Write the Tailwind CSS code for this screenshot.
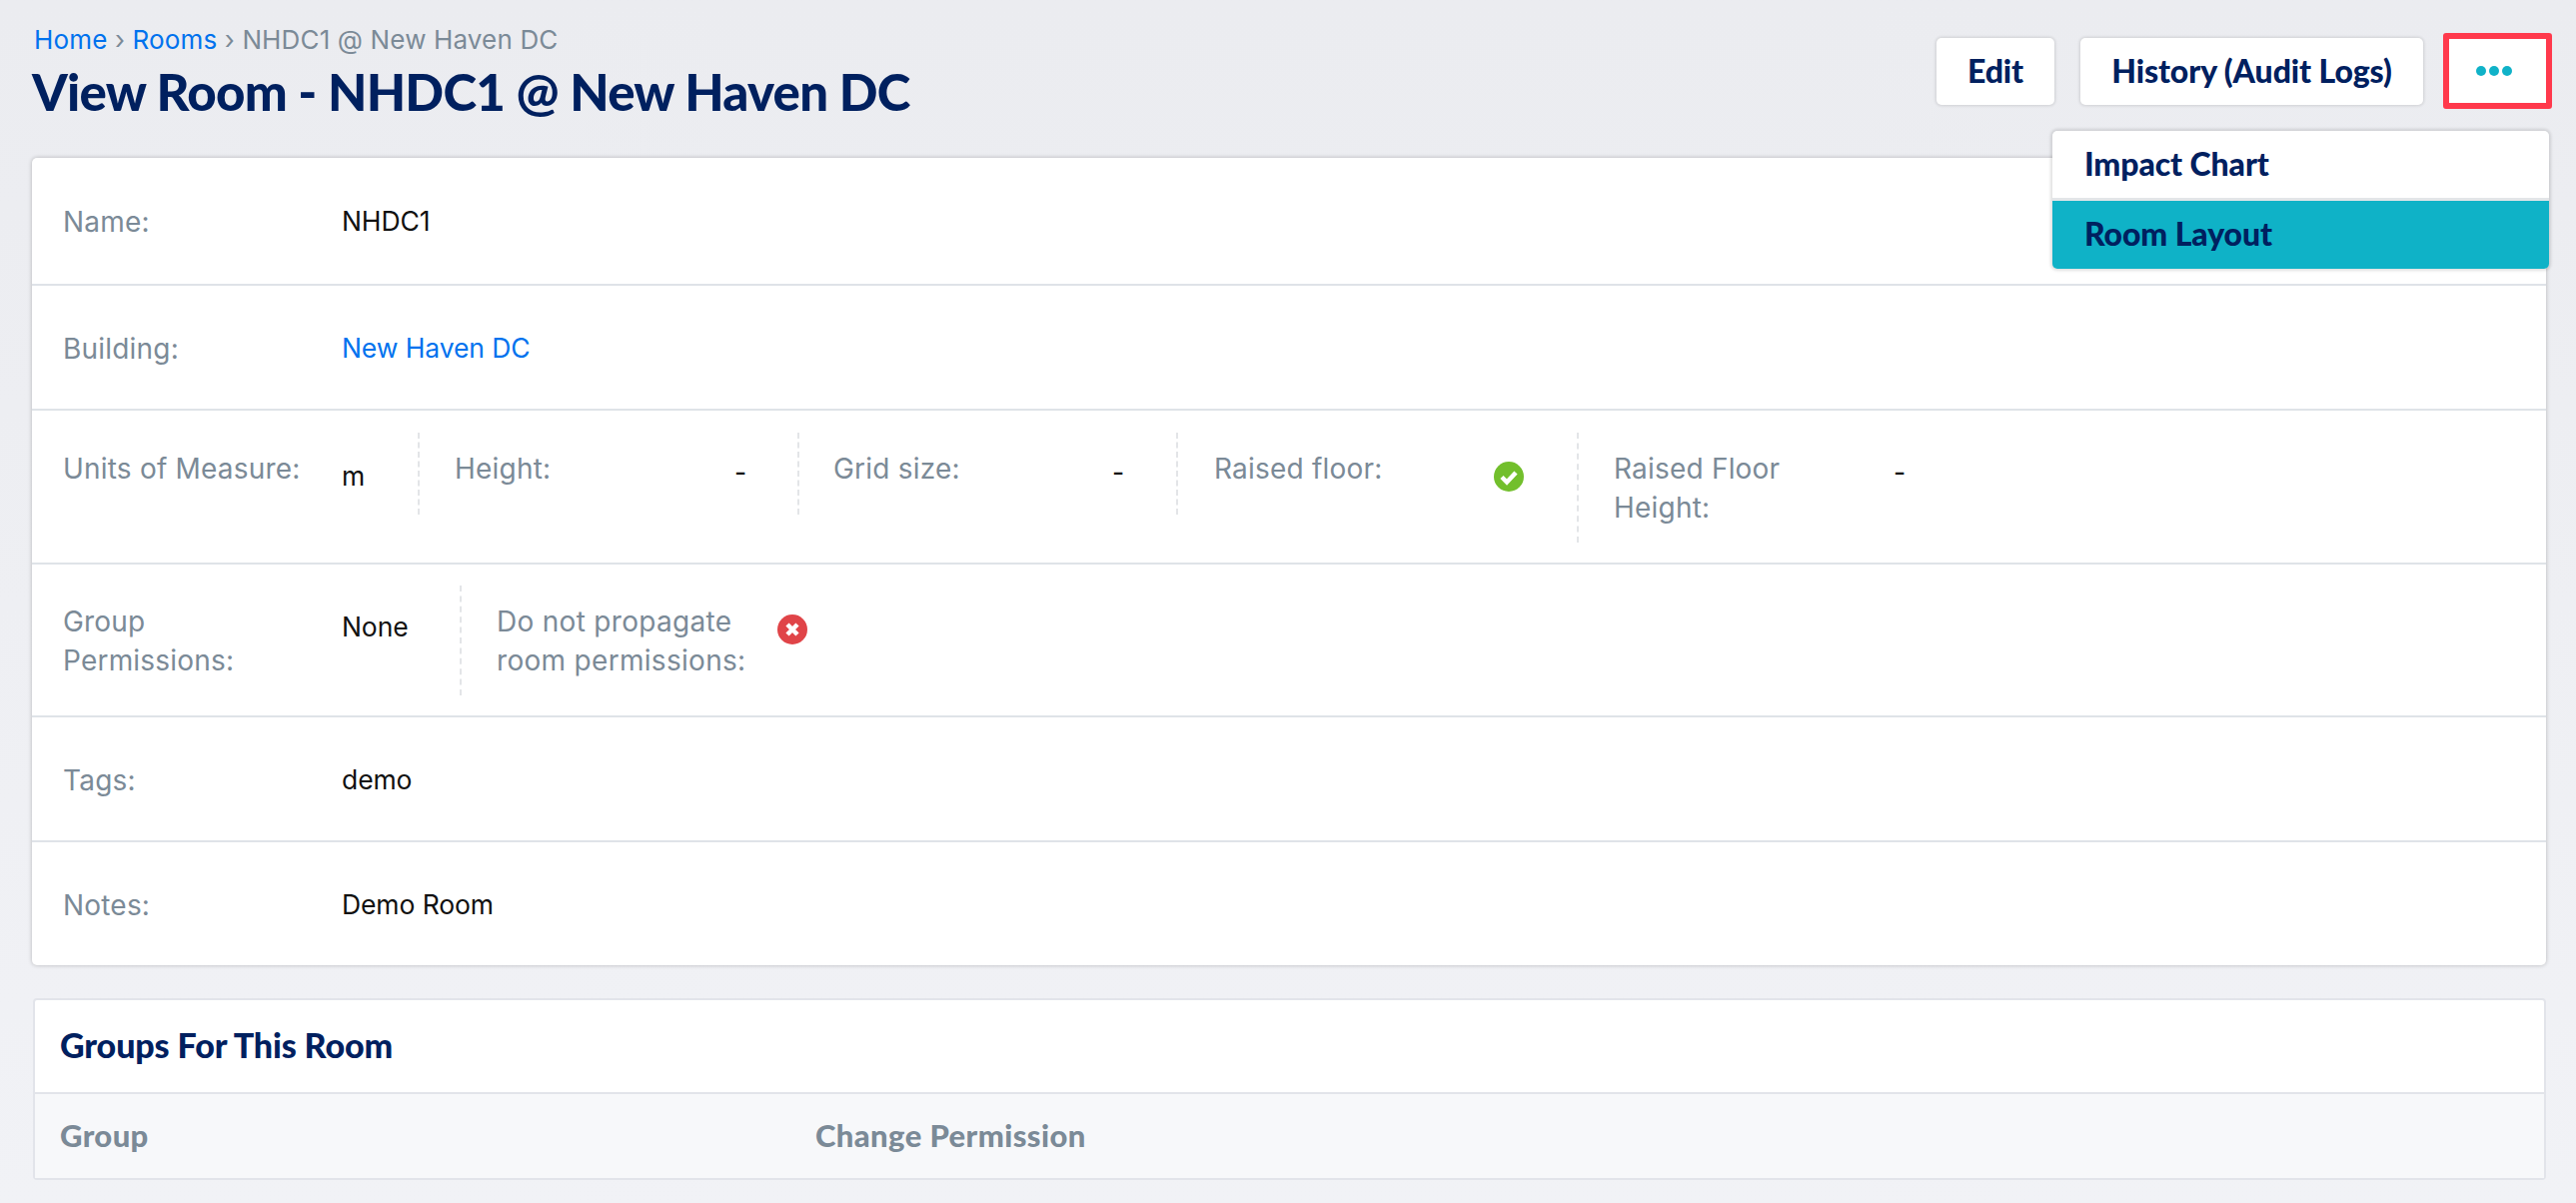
<!DOCTYPE html>
<html lang="en">
<head>
  <meta charset="UTF-8" />
  <title>View Room</title>
  <script src="https://cdn.jsdelivr.net/npm/@tailwindcss/browser@4"></script>
</head>
<body class="min-h-screen bg-linear-to-b from-[#ebecf0] to-[#f1f2f6] font-['Inter',sans-serif] text-[26.5px] tracking-[-0.1px] text-[#111] overflow-hidden">

  <!-- header -->
  <header class="relative h-[158px] pr-[24px] pl-[32px] flex justify-between items-start">
    <div class="pt-[23px]">
      <nav class="pl-[2px] h-[36px] text-[26px] tracking-[0.15px] leading-[34px] text-[#7b8a97]">
        <a class="text-[#0072ee]">Home</a> › <a class="text-[#0072ee]">Rooms</a> › NHDC1 @ New Haven DC
      </nav>
      <h1 class="font-['Lato',sans-serif] font-black text-[51px] leading-[66px] tracking-[-0.75px] text-[#00205f]">View Room - NHDC1 @ New Haven DC</h1>
    </div>
    <div class="flex items-center pt-[33px] font-['Lato',sans-serif] font-black text-[32px] text-[#00205f]">
      <button class="w-[118px] h-[67px] mr-[26px] bg-white rounded-[5px] shadow-[0_0_3px_1px_rgba(0,0,0,0.12)]">Edit</button>
      <button class="w-[343px] h-[67px] mr-[20px] bg-white rounded-[5px] shadow-[0_0_3px_1px_rgba(0,0,0,0.12)]">History (Audit Logs)</button>
      <button class="w-[109px] h-[76px] pr-[7px] bg-white border-[6px] border-[#ff394c] rounded-[3px] flex items-center justify-center gap-[3px]">
        <span class="w-[10px] h-[10px] rounded-full bg-[#10b2c8]"></span>
        <span class="w-[10px] h-[10px] rounded-full bg-[#10b2c8]"></span>
        <span class="w-[10px] h-[10px] rounded-full bg-[#10b2c8]"></span>
      </button>
    </div>
    <!-- dropdown -->
    <div class="absolute z-10 left-[2054px] top-[131px] w-[497px] bg-[#e3e5e8] rounded-[5px] shadow-[0_0_3px_2px_rgba(0,0,0,0.12)] font-['Lato',sans-serif] font-black text-[32px] text-[#00205f]">
      <div class="h-[67px] mb-[3px] pl-[32px] pb-[2px] flex items-center bg-white rounded-t-[5px]">Impact Chart</div>
      <div class="h-[68px] pl-[32px] pb-[2px] flex items-center bg-[#0fb2c7] rounded-b-[5px]">Room Layout</div>
    </div>
  </header>

  <!-- room details -->
  <section class="ml-[32px] mr-[30px] h-[808px] bg-white rounded-[5px] shadow-[0_0_4px_rgba(0,0,0,0.25)] flex flex-col divide-y-2 divide-[#dfe3e8]">
    <div class="h-[128px] pl-[31px] pt-[2px] flex items-center">
      <div class="w-[279px] text-[28px] tracking-[0.2px] text-[#7b8a97]">Name:</div>
      <div>NHDC1</div>
    </div>
    <div class="h-[125px] pl-[31px] pt-[2px] flex items-center">
      <div class="w-[279px] text-[28px] tracking-[0.2px] text-[#7b8a97]">Building:</div>
      <a class="text-[#0072ee]">New Haven DC</a>
    </div>
    <div class="h-[154px] pl-[31px] pt-[22px] flex items-start leading-[39px]">
      <div class="w-[279px] pt-[17px] text-[28px] tracking-[0.2px] text-[#7b8a97]">Units of Measure:</div>
      <div class="w-[78px] h-[82px] pt-[24px] border-r-2 border-dashed border-[#e3e5e8]">m</div>
      <div class="w-[315px] pl-[35px] pt-[17px] text-[28px] tracking-[0.2px] text-[#7b8a97]">Height:</div>
      <div class="w-[65px] h-[82px] pt-[20px] border-r-2 border-dashed border-[#e3e5e8]">-</div>
      <div class="w-[313px] pl-[34px] pt-[17px] text-[28px] tracking-[0.2px] text-[#7b8a97]">Grid size:</div>
      <div class="w-[66px] h-[82px] pt-[20px] border-r-2 border-dashed border-[#e3e5e8]">-</div>
      <div class="w-[316px] pl-[36px] pt-[17px] text-[28px] tracking-[0.2px] text-[#7b8a97]">Raised floor:</div>
      <div class="w-[85px] h-[110px] pt-[29px] border-r-2 border-dashed border-[#e3e5e8]">
        <svg class="w-[30px] h-[30px]" viewBox="0 0 30 30"><circle cx="15" cy="15" r="15" fill="#72bf2c"/><path d="M8 15.5l5 5 9-9.5" fill="none" stroke="#fff" stroke-width="4.5"/></svg>
      </div>
      <div class="w-[315px] pl-[35px] pt-[17px] text-[28px] tracking-[0.2px] text-[#7b8a97]">Raised Floor<br>Height:</div>
      <div class="pt-[20px]">-</div>
    </div>
    <div class="h-[153px] pl-[31px] pt-[21px] flex items-start leading-[39px]">
      <div class="w-[279px] pt-[17px] text-[28px] tracking-[0.2px] text-[#7b8a97]">Group<br>Permissions:</div>
      <div class="w-[120px] h-[110px] pt-[22px] border-r-2 border-dashed border-[#e3e5e8]">None</div>
      <div class="w-[316px] pl-[35px] pt-[17px] text-[28px] tracking-[0.3px] text-[#7b8a97]">Do not propagate<br>room permissions:</div>
      <div class="pt-[29px]">
        <svg class="w-[30px] h-[30px]" viewBox="0 0 30 30"><circle cx="15" cy="15" r="15" fill="#e04448"/><path d="M10 10l10 10M20 10l-10 10" fill="none" stroke="#fff" stroke-width="4.5"/></svg>
      </div>
    </div>
    <div class="h-[125px] pl-[31px] pt-[2px] flex items-center">
      <div class="w-[279px] text-[28px] tracking-[0.2px] text-[#7b8a97]">Tags:</div>
      <div>demo</div>
    </div>
    <div class="flex-1 pl-[31px] pt-[2px] flex items-center">
      <div class="w-[279px] text-[28px] tracking-[0.2px] text-[#7b8a97]">Notes:</div>
      <div>Demo Room</div>
    </div>
  </section>

  <!-- groups -->
  <section class="mt-[33px] ml-[33px] mr-[30px] h-[182px] bg-white rounded-[4px] border-2 border-[#e2e4ea] flex flex-col font-['Lato',sans-serif] font-black">
    <h2 class="h-[94px] pl-[25px] pb-[4px] flex items-center text-[34px] text-[#00205f] border-b-2 border-[#e2e4ea]">Groups For This Room</h2>
    <div class="flex-1 pl-[25px] pb-[2px] flex items-center bg-[#f7f8fa] text-[31px] tracking-[0.4px] text-[#7b8a97]">
      <div class="w-[756px]">Group</div>
      <div>Change Permission</div>
    </div>
  </section>

</body>
</html>
